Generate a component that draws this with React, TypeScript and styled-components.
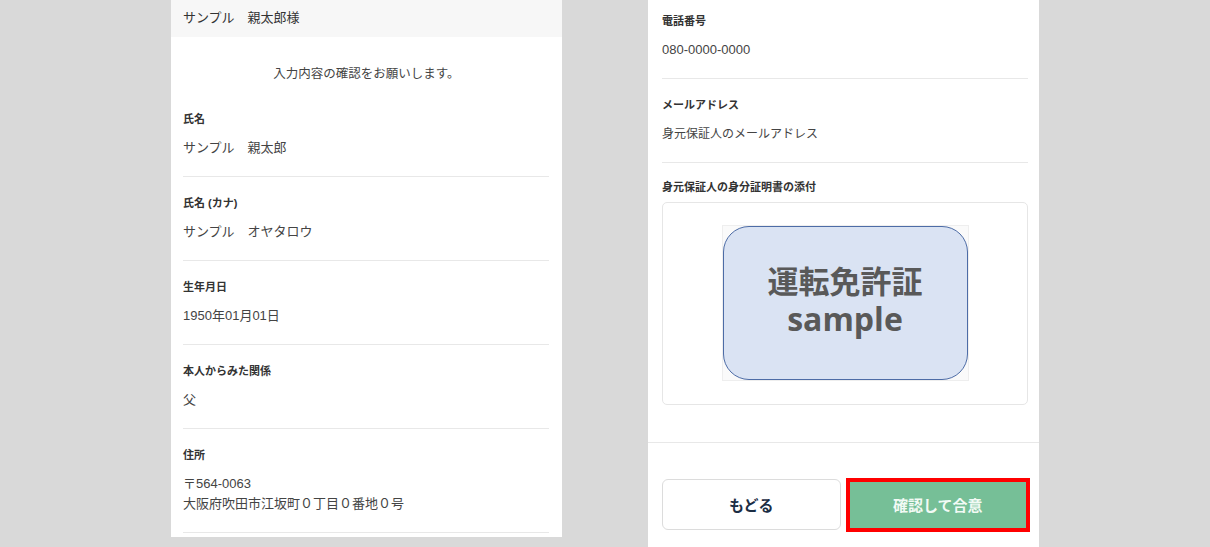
import React from 'react';
import styled, {createGlobalStyle} from 'styled-components';

const GlobalStyle = createGlobalStyle`
  html, body {
    margin: 0;
    padding: 0;
    background: #d9d9d9;
  }
  body {
    font-family: "Liberation Sans", "Noto Sans CJK JP", sans-serif;
    color: #333;
  }
`;

interface FieldData {
  label: string;
  lines: string[];
  small?: boolean;
}

const leftFields: FieldData[] = [
  {label: '氏名', lines: ['サンプル　親太郎']},
  {label: '氏名 (カナ)', lines: ['サンプル　オヤタロウ']},
  {label: '生年月日', lines: ['1950年01月01日']},
  {label: '本人からみた関係', lines: ['父']},
  {label: '住所', lines: ['〒564-0063', '大阪府吹田市江坂町０丁目０番地０号']},
];

const rightFields: FieldData[] = [
  {label: '電話番号', lines: ['080-0000-0000']},
  {label: 'メールアドレス', lines: ['身元保証人のメールアドレス'], small: true},
];

const Field = ({label, lines, small}: FieldData) => (
  <FieldRow>
    <Label>{label}</Label>
    <Value $small={small}>
      {lines.map((line) => (
        <div key={line}>{line}</div>
      ))}
    </Value>
  </FieldRow>
);

export default function App() {
  return (
    <>
      <GlobalStyle />
      <Page>
        <LeftPanel>
          <Header>サンプル　親太郎様</Header>
          <Intro>入力内容の確認をお願いします。</Intro>
          <FieldList>
            {leftFields.map((f) => (
              <Field key={f.label} {...f} />
            ))}
          </FieldList>
        </LeftPanel>

        <RightPanel>
          <ScrollBody>
            {rightFields.map((f) => (
              <Field key={f.label} {...f} />
            ))}
            <Attachment>
              <Label>身元保証人の身分証明書の添付</Label>
              <PreviewBox>
                <SampleImage>
                  <LicenseCard>
                    <CardText>
                      運転免許証
                      <br />
                      <SampleWord>sample</SampleWord>
                    </CardText>
                  </LicenseCard>
                </SampleImage>
              </PreviewBox>
            </Attachment>
          </ScrollBody>

          <Footer>
            <BackButton>もどる</BackButton>
            <AgreeWrap>
              <AgreeButton>確認して合意</AgreeButton>
              <Highlight />
            </AgreeWrap>
          </Footer>
        </RightPanel>
      </Page>
    </>
  );
}

const Page = styled.div`
  display: flex;
  align-items: flex-start;
  gap: 86px;
  padding-left: 171px;
  height: 547px;
  overflow: hidden;
`;

const LeftPanel = styled.section`
  width: 391px;
  height: 537px;
  background: #fff;
  overflow: hidden;
`;

const Header = styled.div`
  height: 37px;
  line-height: 36px;
  padding-left: 12px;
  background: #f7f7f7;
  font-size: 13px;
  color: #333;
`;

const Intro = styled.p`
  margin: 0;
  padding: 27px 0 9px;
  line-height: 20px;
  text-align: center;
  font-size: 12.5px;
  color: #444;
`;

const FieldList = styled.div`
  padding: 0 13px 0 12px;
`;

const FieldRow = styled.div`
  padding: 18px 0 18px;
  border-bottom: 1px solid #e8e8e8;
`;

const Label = styled.div`
  line-height: 16px;
  font-size: 11px;
  font-weight: 700;
  color: #333;
`;

const Value = styled.div<{$small?: boolean}>`
  margin-top: 11px;
  line-height: 20px;
  font-size: ${({$small}) => ($small ? '12px' : '13px')};
  color: #444;
`;

const RightPanel = styled.section`
  width: 391px;
  height: 547px;
  background: #fff;
  display: flex;
  flex-direction: column;
  overflow: hidden;
`;

const ScrollBody = styled.div`
  margin-top: -5px;
  padding: 0 11px 37px 14px;
`;

const Attachment = styled.div`
  padding-top: 16px;

  ${Label} {
    margin-bottom: 7px;
  }
`;

const PreviewBox = styled.div`
  height: 203px;
  box-sizing: border-box;
  border: 1px solid #e6e6e6;
  border-radius: 5px;
  display: flex;
  align-items: center;
  justify-content: center;
  padding-bottom: 1px;
`;

const SampleImage = styled.div`
  width: 247px;
  height: 156px;
  box-sizing: border-box;
  border: 1px solid #eeeeee;
  background: #fafafa;
  display: flex;
`;

const LicenseCard = styled.div`
  flex: 1;
  box-sizing: border-box;
  border: 1.5px solid #4d6ca6;
  border-radius: 26px;
  background: #dae3f3;
  display: flex;
  align-items: center;
  justify-content: center;
  padding-bottom: 8px;
`;

const CardText = styled.div`
  font-family: "Noto Sans CJK JP", sans-serif;
  font-size: 31px;
  line-height: 38px;
  font-weight: 700;
  color: #595959;
  text-align: center;
`;

const SampleWord = styled.span`
  font-family: "Open Sans", sans-serif;
  font-size: 32px;
`;

const Footer = styled.div`
  border-top: 1px solid #e8e8e8;
  padding: 36px 13px 0 14px;
  display: flex;
  gap: 9px;
`;

const ButtonBase = styled.button`
  flex: 1 1 0;
  min-width: 0;
  height: 51px;
  padding: 0;
  border-radius: 6px;
  font-family: "Noto Sans CJK JP", sans-serif;
  font-size: 15px;
  font-weight: 700;
  cursor: pointer;
`;

const BackButton = styled(ButtonBase)`
  background: #fff;
  border: 1px solid #dcdcdc;
  color: #1b2d44;
`;

const AgreeWrap = styled.div`
  flex: 1 1 0;
  min-width: 0;
  position: relative;
  display: flex;
`;

const AgreeButton = styled(ButtonBase)`
  border: none;
  border-radius: 0;
  background: #76bf97;
  color: #f2faf5;
`;

const Highlight = styled.div`
  position: absolute;
  left: -4px;
  top: -1px;
  width: 184px;
  height: 54px;
  box-sizing: border-box;
  border: 4px solid #ff0000;
  pointer-events: none;
`;
